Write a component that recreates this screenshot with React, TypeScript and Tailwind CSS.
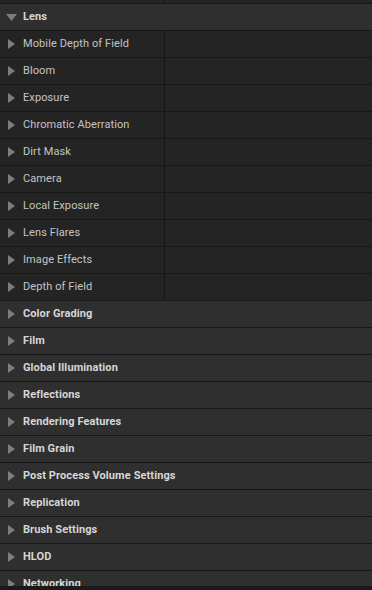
import React from 'react';

const lensItems = [
  'Mobile Depth of Field',
  'Bloom',
  'Exposure',
  'Chromatic Aberration',
  'Dirt Mask',
  'Camera',
  'Local Exposure',
  'Lens Flares',
  'Image Effects',
  'Depth of Field',
];

const sections = [
  'Color Grading',
  'Film',
  'Global Illumination',
  'Reflections',
  'Rendering Features',
  'Film Grain',
  'Post Process Volume Settings',
  'Replication',
  'Brush Settings',
  'HLOD',
  'Networking',
];

const ArrowRight = () => (
  <svg width="7" height="10" viewBox="0 0 7 10" className="shrink-0">
    <path d="M0 0 L7 5 L0 10 Z" fill="#7d7d7d" />
  </svg>
);

const ArrowDown = () => (
  <svg width="11" height="7" viewBox="0 0 11 7" className="shrink-0">
    <path d="M0 0 L11 0 L5.5 7 Z" fill="#7d7d7d" />
  </svg>
);

const SubRow: React.FC<{ label: string }> = ({ label }) => (
  <div className="flex h-[27px] shrink-0 border-b border-[#171717] bg-[#242424]">
    <div className="flex w-[165px] items-center gap-[8px] border-r border-[#171717] pl-[8px]">
      <ArrowRight />
      <span className="text-[11px] tracking-[0.1px] text-[#c4c4c4]">{label}</span>
    </div>
    <div className="flex-1" />
  </div>
);

const Section: React.FC<{ label: string; open?: boolean }> = ({ label, open }) => (
  <div className="flex h-[27px] shrink-0 items-center border-b border-[#171717] bg-[#2f2f2f]">
    {open ? (
      <div className="flex w-[23px] justify-center pr-[1px]">
        <ArrowDown />
      </div>
    ) : (
      <div className="flex w-[23px] pl-[8px]">
        <ArrowRight />
      </div>
    )}
    <span className="text-[11px] font-bold tracking-[0.1px] text-[#d6d6d6]">{label}</span>
  </div>
);

export default function App() {
  return (
    <div
      className="flex h-[590px] w-[372px] flex-col bg-[#1a1a1a]"
      style={{ fontFamily: 'Roboto, "Liberation Sans", sans-serif' }}
    >
      <div className="flex h-[586px] flex-col overflow-hidden">
        <div className="flex h-[4px] shrink-0 border-b border-[#171717] bg-[#242424]">
          <div className="w-[165px] border-r border-[#171717]" />
        </div>
        <Section label="Lens" open />
        {lensItems.map((l) => (
          <SubRow key={l} label={l} />
        ))}
        {sections.map((s) => (
          <Section key={s} label={s} />
        ))}
      </div>
      <div className="h-[4px] shrink-0 bg-[#1a1a1a]" />
    </div>
  );
}
